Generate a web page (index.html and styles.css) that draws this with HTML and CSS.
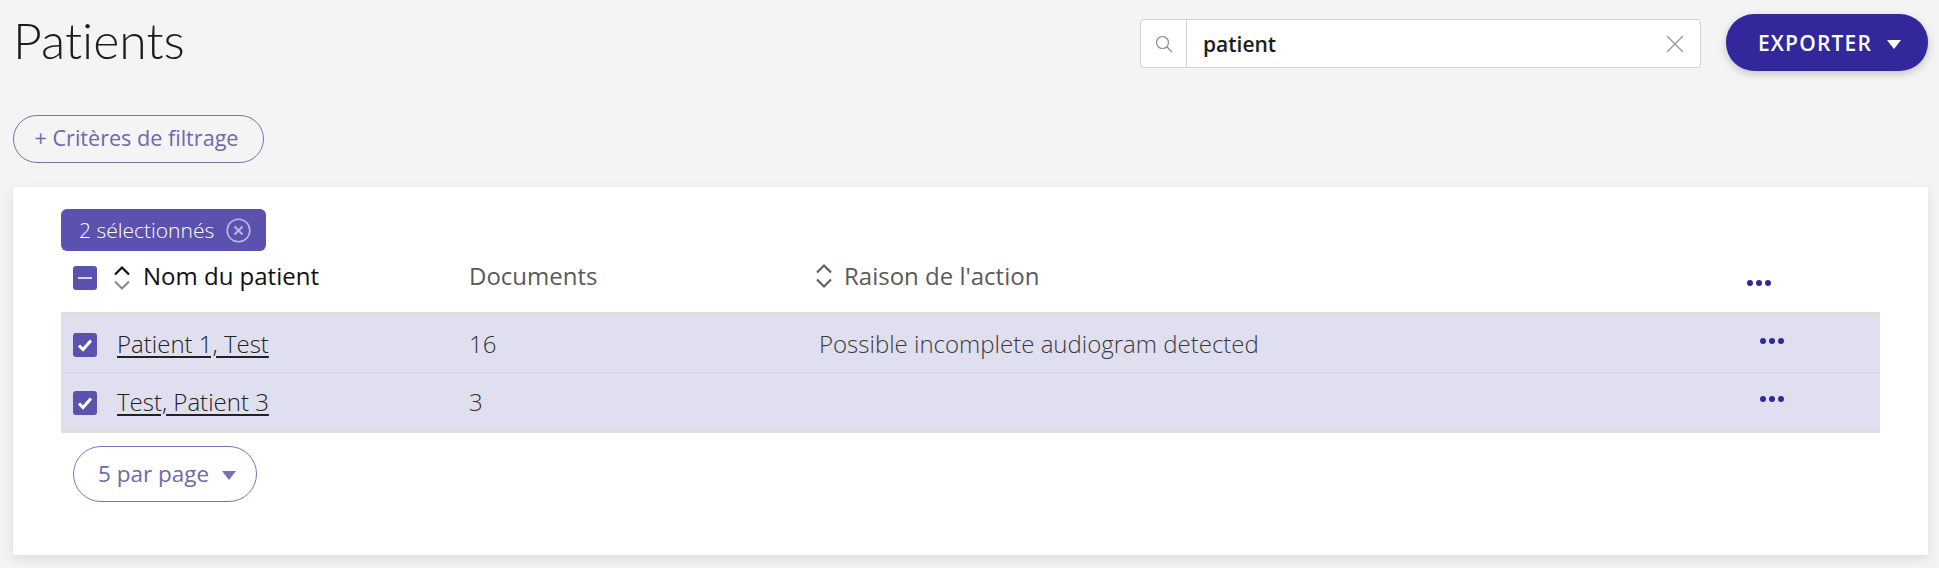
FILE: index.html
```html
<!DOCTYPE html>
<html lang="fr">
<head>
    <meta charset="UTF-8">
    <title>Patients</title>
    <link rel="stylesheet" href="styles.css">
</head>
<body>
    <header class="top-bar">
        <h1 class="page-title">Patients</h1>
        <div class="search">
            <span class="search-icon">
                <svg width="18" height="18" viewBox="0 0 18 18" fill="none" stroke="#8a8a8a" stroke-width="1.2">
                    <circle cx="7.5" cy="7.5" r="6"/>
                    <path d="M12 12l5 5"/>
                </svg>
            </span>
            <span class="search-value">patient</span>
            <svg class="search-clear" width="18" height="18" viewBox="0 0 18 18" fill="none" stroke="#9b9b9b" stroke-width="1.4">
                <path d="M1 1l16 16M17 1L1 17"/>
            </svg>
        </div>
        <button class="export-button">EXPORTER <span class="caret-white"></span></button>
    </header>

    <div class="filter-bar">
        <button class="outline-button filter-button">+ Critères de filtrage</button>
    </div>

    <main class="card">
        <div class="selected-badge">
            2 sélectionnés
            <svg width="25" height="25" viewBox="0 0 25 25" fill="none" stroke="#bdb8e0" stroke-width="1.6">
                <circle cx="12.5" cy="12.5" r="11.3"/>
                <path d="M8.5 8.5l8 8M16.5 8.5l-8 8" stroke-width="2"/>
            </svg>
        </div>

        <table class="patients">
            <colgroup>
                <col class="col-name">
                <col class="col-docs">
                <col class="col-reason">
                <col class="col-menu">
            </colgroup>
            <thead>
                <tr>
                    <th class="name-head">
                        <div class="cell-flex">
                            <span class="checkbox"><span class="dash"></span></span>
                            <svg class="sort" width="18" height="26" viewBox="0 0 18 26" fill="none" stroke-width="2.2">
                                <path d="M2 9.5l7-7 7 7" stroke="#111"/>
                                <path d="M2 16.5l7 7 7-7" stroke="#8c8c8c"/>
                            </svg>
                            <span class="head-label">Nom du patient</span>
                        </div>
                    </th>
                    <th class="muted-head">Documents</th>
                    <th class="muted-head">
                        <div class="cell-flex reason-head">
                            <svg class="sort" width="18" height="26" viewBox="0 0 18 26" fill="none" stroke="#5f5f5f" stroke-width="2.2">
                                <path d="M2 9.5l7-7 7 7"/>
                                <path d="M2 16.5l7 7 7-7"/>
                            </svg>
                            Raison de l'action
                        </div>
                    </th>
                    <th class="menu-head"><span class="dots"><i></i><i></i><i></i></span></th>
                </tr>
            </thead>
            <tbody>
                <tr>
                    <td>
                        <div class="cell-flex row-name">
                            <span class="checkbox">
                                <svg width="16" height="14" viewBox="0 0 16 14" fill="none" stroke="#fff" stroke-width="3"><path d="M2 7.5l4 4 8-9"/></svg>
                            </span>
                            <a href="#">Patient 1, Test</a>
                        </div>
                    </td>
                    <td>16</td>
                    <td class="reason">Possible incomplete audiogram detected</td>
                    <td class="menu-cell"><span class="dots"><i></i><i></i><i></i></span></td>
                </tr>
                <tr>
                    <td>
                        <div class="cell-flex row-name">
                            <span class="checkbox">
                                <svg width="16" height="14" viewBox="0 0 16 14" fill="none" stroke="#fff" stroke-width="3"><path d="M2 7.5l4 4 8-9"/></svg>
                            </span>
                            <a href="#">Test, Patient 3</a>
                        </div>
                    </td>
                    <td>3</td>
                    <td class="reason"></td>
                    <td class="menu-cell"><span class="dots"><i></i><i></i><i></i></span></td>
                </tr>
            </tbody>
        </table>

        <button class="outline-button per-page">5 par page <span class="caret-purple"></span></button>
    </main>
</body>
</html>
```

FILE: styles.css
```css
:root {
    --bg-color: #f4f4f4;
    --text-color: #222;
    --purple: #5b52b0;
    --dark-purple: #32289c;
    --outline: #7a72b4;
    --row-bg: #e0dff0;
    --rule: #dedede;
}

* {
    box-sizing: border-box;
}

body {
    margin: 0;
    padding: 0 11px 0 13px;
    height: 568px;
    overflow: hidden;
    font-family: "Open Sans", sans-serif;
    font-size: 24px;
    background-color: var(--bg-color);
    color: var(--text-color);
}

.top-bar {
    display: flex;
    align-items: flex-start;
    height: 115px;
    padding-top: 13px;
}

.page-title {
    margin: 0 auto 0 0;
    font-family: Lato, sans-serif;
    font-variant-ligatures: none;
    font-weight: 300;
    font-size: 50px;
    line-height: 54px;
    color: #1c1c1c;
}

.search {
    display: flex;
    align-items: center;
    width: 561px;
    height: 49px;
    margin-top: 6px;
    margin-right: 25px;
    background: #fff;
    border: 1px solid #d2d2d2;
    border-radius: 3px;
}

.search-icon {
    display: flex;
    align-items: center;
    justify-content: center;
    width: 46px;
    height: 100%;
    border-right: 1px solid #d2d2d2;
}

.search-value {
    flex: 1;
    padding-left: 16px;
    font-size: 21px;
    font-weight: 600;
    color: #1d1d1d;
}

.search-clear {
    margin-right: 16px;
}

.export-button {
    display: flex;
    align-items: center;
    justify-content: center;
    gap: 15px;
    width: 202px;
    height: 57px;
    margin-top: 1px;
    padding: 0 0 0 5px;
    border: none;
    border-radius: 28px;
    background: var(--dark-purple);
    color: #fff;
    font-family: inherit;
    font-size: 21px;
    font-weight: 600;
    letter-spacing: 1.2px;
    box-shadow: 0 3px 8px rgba(0, 0, 0, 0.2);
}

.caret-white {
    width: 0;
    height: 0;
    margin-top: 3px;
    border-left: 7px solid transparent;
    border-right: 7px solid transparent;
    border-top: 9px solid #fff;
}

.filter-bar {
    height: 72px;
}

.outline-button {
    border: 1px solid var(--outline);
    background: transparent;
    color: #6f68ad;
    font-family: inherit;
    font-size: 22.5px;
}

.filter-button {
    width: 251px;
    height: 48px;
    border-radius: 24px;
    padding: 0 4px 4px 0;
    font-size: 21.6px;
}

.card {
    height: 368px;
    padding: 22px 48px 0;
    background: #fff;
    box-shadow: 0 4px 12px rgba(0, 0, 0, 0.1);
}

.selected-badge {
    display: inline-flex;
    align-items: center;
    gap: 12px;
    height: 42px;
    padding: 0 15px 0 18px;
    background: var(--purple);
    border-radius: 6px;
    color: #fff;
    font-weight: 300;
    font-size: 21px;
    vertical-align: top;
}

.patients {
    width: 1819px;
    border-collapse: collapse;
    table-layout: fixed;
}

.col-name {
    width: 408px;
}

.col-docs {
    width: 350px;
}

.col-menu {
    width: 160px;
}

th {
    height: 62px;
    padding: 0 0 11px;
    text-align: left;
    font-weight: 400;
    border-bottom: 3px solid var(--rule);
}

.muted-head {
    color: #5a5a5a;
}

.name-head {
    color: #111;
}

.cell-flex {
    display: flex;
    align-items: center;
}

.name-head .cell-flex {
    padding-left: 12px;
}

.name-head .checkbox,
.name-head .sort {
    position: relative;
    top: 2px;
}

.name-head .sort {
    margin: 0 12px 0 16px;
}

.reason-head {
    margin-left: -4px;
    gap: 11px;
}

.checkbox {
    display: flex;
    align-items: center;
    justify-content: center;
    flex: none;
    width: 24px;
    height: 24px;
    background: var(--purple);
    border-radius: 3px;
}

.dash {
    width: 14px;
    height: 2px;
    background: #d9d6ee;
}

tbody tr {
    background: var(--row-bg);
}

td {
    height: 59px;
    padding: 0;
    font-weight: 300;
    color: #333;
    border-bottom: 1px solid #d9d7e8;
}

tbody tr:last-child td {
    border-bottom: 3px solid var(--rule);
}

.row-name {
    padding-left: 12px;
    gap: 20px;
}

.row-name .checkbox {
    position: relative;
    top: 2px;
}

.row-name a {
    color: #222;
    text-decoration: underline;
    text-decoration-thickness: 2px;
    text-underline-offset: 3px;
}

.reason {
    color: #3a3a3a;
}

.dots {
    display: inline-flex;
    gap: 3px;
    vertical-align: middle;
}

.dots i {
    width: 6px;
    height: 6px;
    border-radius: 50%;
    background: var(--dark-purple);
}

.menu-head {
    padding: 0 0 2px 27px;
}

.menu-cell {
    padding-left: 40px;
    padding-bottom: 10px;
}

.per-page {
    display: flex;
    align-items: center;
    gap: 13px;
    width: 184px;
    height: 56px;
    margin: 13px 0 0 12px;
    padding: 0 0 0 24px;
    border-radius: 28px;
}

.caret-purple {
    width: 0;
    height: 0;
    margin-top: 3px;
    border-left: 7px solid transparent;
    border-right: 7px solid transparent;
    border-top: 9px solid var(--outline);
}
```
